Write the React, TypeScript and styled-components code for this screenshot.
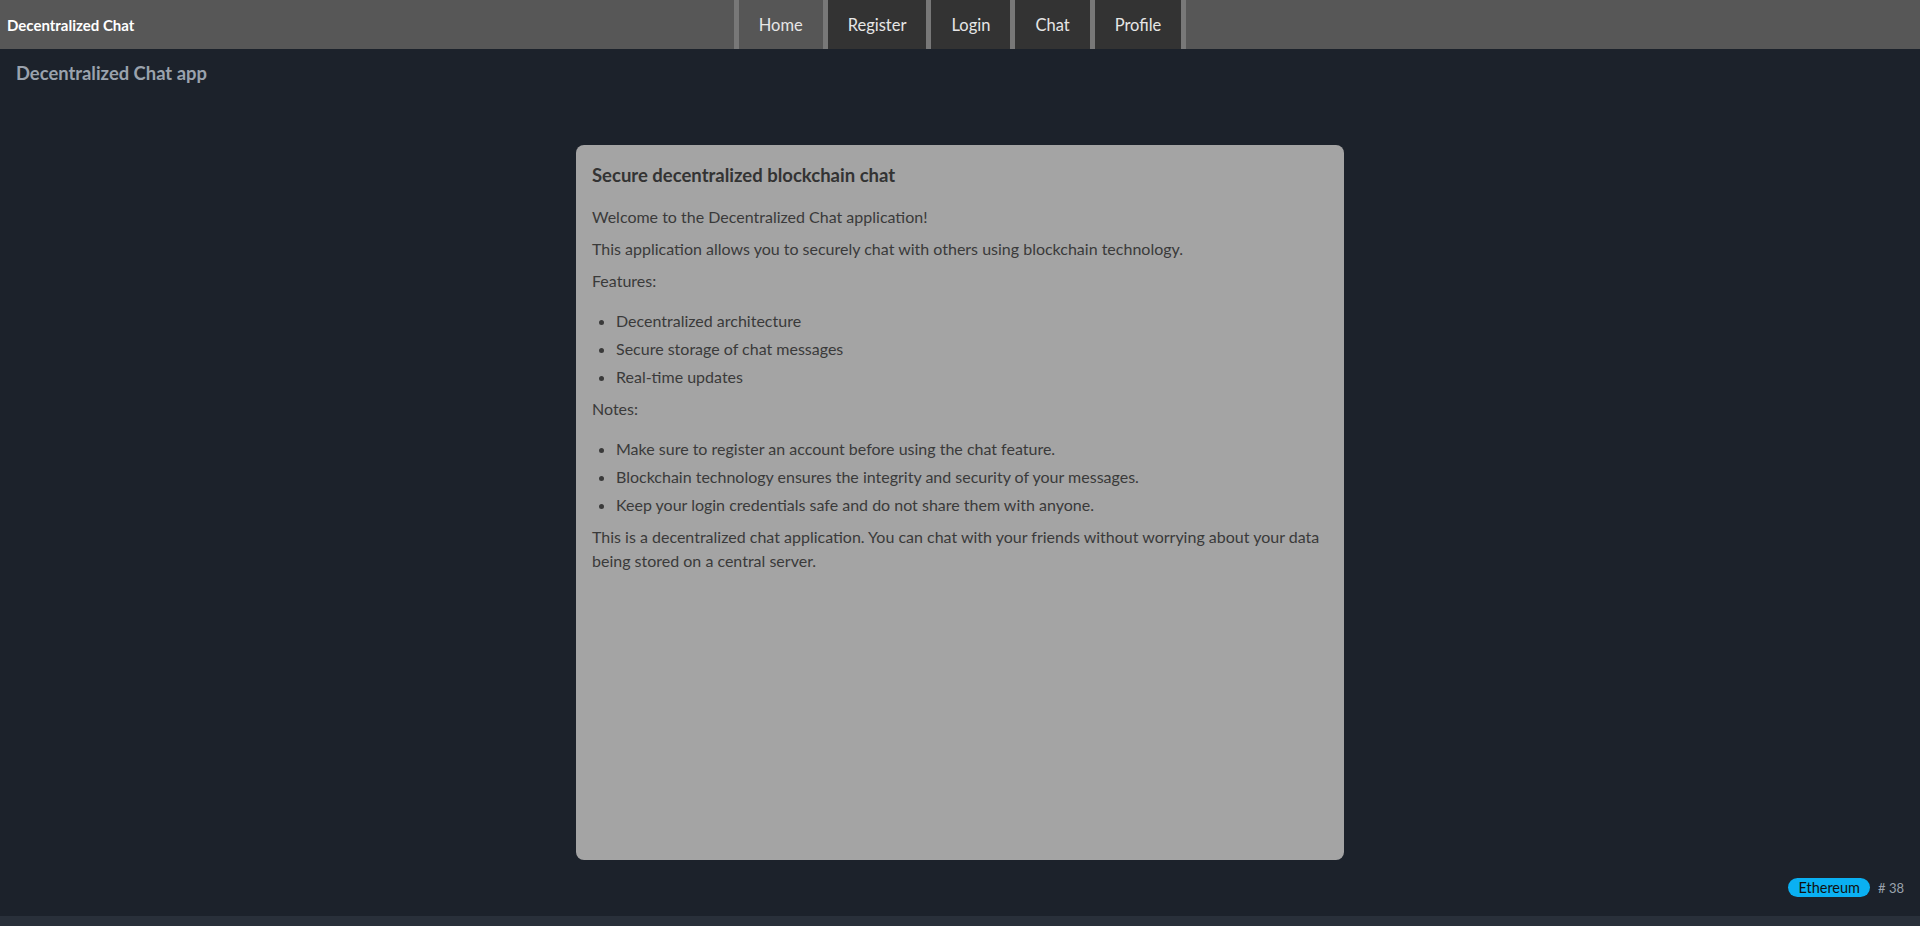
import React from "react";
import styled, { createGlobalStyle } from "styled-components";

const GlobalStyle = createGlobalStyle`
  html, body {
    margin: 0;
    padding: 0;
    background: #1c222b;
    font-family: "Lato", "Open Sans", sans-serif;
  }
  * { box-sizing: border-box; }
`;

const Page = styled.div`
  height: 926px;
  display: flex;
  flex-direction: column;
  overflow: hidden;
`;

const Header = styled.header`
  height: 49px;
  background: #575757;
  display: grid;
  grid-template-columns: 1fr auto 1fr;
  align-items: center;
`;

const Brand = styled.div`
  padding-left: 7px;
  color: #ffffff;
  font-weight: 700;
  font-size: 15px;
`;

const Nav = styled.nav`
  height: 49px;
  display: flex;
  gap: 5px;
  padding: 0 5px;
  background: #787878;
`;

const NavItem = styled.a<{ $active?: boolean }>`
  display: flex;
  align-items: center;
  padding: 0 20px;
  background: ${(p) => (p.$active ? "#565656" : "#333333")};
  color: #e6e6e6;
  font-size: 16.5px;
  text-decoration: none;
  cursor: pointer;
`;

const Main = styled.main`
  flex: 1;
  display: flex;
  flex-direction: column;
`;

const Subtitle = styled.h2`
  margin: 12px 0 0 16px;
  font-size: 18.4px;
  line-height: 24px;
  font-weight: 700;
  color: #9aa2ad;
`;

const Card = styled.section`
  width: 768px;
  height: 715px;
  margin: 60px auto 0;
  background: #a4a4a4;
  border-radius: 8px;
  padding: 18px 16px 16px;
  color: #3a3a3a;
  display: flex;
  flex-direction: column;
  gap: 8px;
`;

const CardTitle = styled.h3`
  margin: 0 0 10px;
  font-size: 18.5px;
  line-height: 24px;
  font-weight: 700;
  color: #333333;
`;

const Para = styled.p`
  margin: 0;
  font-size: 16px;
  line-height: 24px;
`;

const List = styled.ul`
  margin: 0;
  padding: 8px 0 0 24px;
  display: flex;
  flex-direction: column;
  gap: 4px;
`;

const Item = styled.li`
  font-size: 16px;
  line-height: 24px;
`;

const StatusRow = styled.div`
  display: flex;
  justify-content: flex-end;
  align-items: center;
  gap: 8px;
  padding: 18px 16px 19px 0;
`;

const Badge = styled.span`
  height: 19px;
  padding: 0 10px;
  border-radius: 10px;
  background: #0ab0f2;
  color: #111;
  font-size: 14.5px;
  line-height: 19px;
`;

const Block = styled.span`
  color: #9aa2ad;
  font-size: 13px;
`;

const BottomBar = styled.div`
  height: 10px;
  background: #29303a;
`;

export default function App() {
  return (
    <Page>
      <GlobalStyle />
      <Header>
        <Brand>Decentralized Chat</Brand>
        <Nav>
          <NavItem $active>Home</NavItem>
          <NavItem>Register</NavItem>
          <NavItem>Login</NavItem>
          <NavItem>Chat</NavItem>
          <NavItem>Profile</NavItem>
        </Nav>
        <div />
      </Header>
      <Main>
        <Subtitle>Decentralized Chat app</Subtitle>
        <Card>
          <CardTitle>Secure decentralized blockchain chat</CardTitle>
          <Para>Welcome to the Decentralized Chat application!</Para>
          <Para>This application allows you to securely chat with others using blockchain technology.</Para>
          <Para>Features:</Para>
          <List>
            <Item>Decentralized architecture</Item>
            <Item>Secure storage of chat messages</Item>
            <Item>Real-time updates</Item>
          </List>
          <Para>Notes:</Para>
          <List>
            <Item>Make sure to register an account before using the chat feature.</Item>
            <Item>Blockchain technology ensures the integrity and security of your messages.</Item>
            <Item>Keep your login credentials safe and do not share them with anyone.</Item>
          </List>
          <Para>
            This is a decentralized chat application. You can chat with your friends without worrying about your data
            being stored on a central server.
          </Para>
        </Card>
      </Main>
      <StatusRow>
        <Badge>Ethereum</Badge>
        <Block># 38</Block>
      </StatusRow>
      <BottomBar />
    </Page>
  );
}
